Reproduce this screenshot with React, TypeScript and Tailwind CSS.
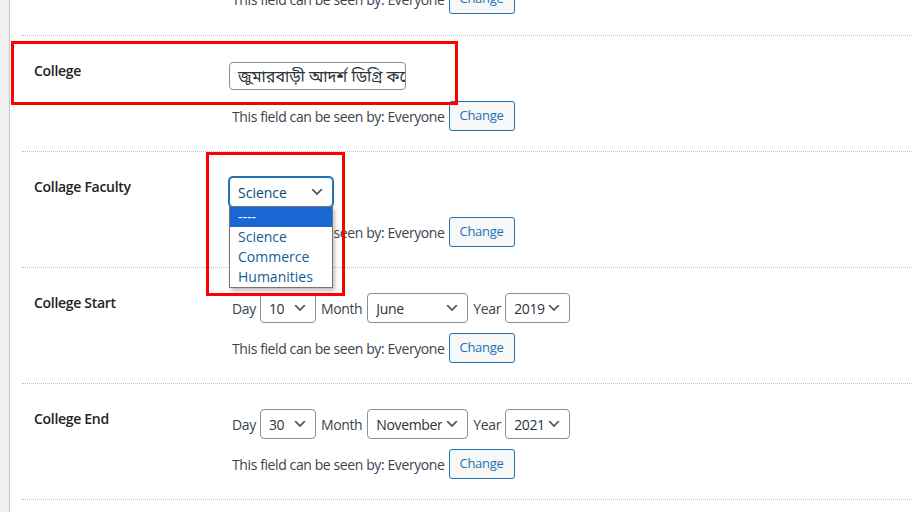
import React from "react";

const FONT = { fontFamily: '"Open Sans", "Noto Sans", "Noto Sans Bengali", sans-serif' };

function Chevron({ color = "#50575e" }: { color?: string }) {
  return (
    <svg viewBox="0 0 20 20" className="size-4 shrink-0" fill={color}>
      <path d="M5 6l5 5 5-5 2 1-7 7-7-7 2-1z" />
    </svg>
  );
}

function Select({ value, width, focused }: { value: string; width: string; focused?: boolean }) {
  return (
    <div
      className={
        "flex h-[30px] items-center justify-between rounded-[4px] border bg-white pl-[8px] pr-[7px] text-[14px] " +
        width +
        (focused
          ? " border-[#2271b1] text-[#0a4b78] shadow-[0_0_0_1px_#2271b1]"
          : " border-[#8c8f94] text-[#2c3338]")
      }
    >
      <span className="truncate">{value}</span>
      <Chevron />
    </div>
  );
}

function Visibility() {
  return (
    <div className="flex h-[30px] items-center pl-[3px]">
      <span className="text-[14px] tracking-[-0.4px] text-[#3c434a]">
        This field can be seen by: Everyone
      </span>
      <button className="ml-[4px] flex h-[30px] w-[66px] items-center justify-center rounded-[3px] border border-[#2271b1] bg-[#f6f7f7] text-[13px] tracking-[-0.3px] text-[#2271b1]">
        Change
      </button>
    </div>
  );
}

function Row({ label, children }: { label: string; children: React.ReactNode }) {
  return (
    <div className="flex h-[116px] border-b border-dotted border-[#c3c4c7] pt-[25px]">
      <div className="w-[207px] shrink-0 pl-[12px] text-[14px] font-semibold leading-[20px] tracking-[-0.3px] text-[#1d2327]">
        {label}
      </div>
      <div className="flex flex-col gap-[10px]">
        <div className="flex h-[30px] items-center">{children}</div>
        <Visibility />
      </div>
    </div>
  );
}

function DateFields({ day, month, year }: { day: string; month: string; year: string }) {
  return (
    <div className="flex items-center text-[14px] tracking-[-0.35px] text-[#3c434a]">
      <span className="pl-[3px] pr-[4px]">Day</span>
      <Select value={day} width="w-[56px]" />
      <span className="px-[5px]">Month</span>
      <Select value={month} width="w-[101px]" />
      <span className="pl-[5px] pr-[4px]">Year</span>
      <Select value={year} width="w-[65px]" />
    </div>
  );
}

export default function App() {
  return (
    <div className="relative flex h-[512px] w-[912px] overflow-hidden bg-white" style={FONT}>
      <div className="w-[10px] shrink-0 border-r border-[#c3c4c7] bg-[#f0f0f0]" />
      <div className="ml-[12px] flex-1">
        <div className="flex h-[36px] items-end border-b border-dotted border-[#c3c4c7] pb-[21px] pl-[207px]">
          <Visibility />
        </div>

        <Row label="College">
          <div className="flex h-[28px] w-[177px] items-center overflow-hidden whitespace-nowrap rounded-[4px] border border-[#8c8f94] bg-white px-[8px] text-[16px] text-[#2c3338]">
            জুমারবাড়ী আদর্শ ডিগ্রি কলেজ
          </div>
        </Row>

        <Row label="Collage Faculty">
          <div className="relative">
            <Select value="Science" width="w-[104px]" focused />
            <div className="absolute left-0 top-[29px] z-10 w-[104px] border border-[#767676] bg-white text-[14px] leading-[20px] text-[#135e96] shadow-[2px_3px_4px_rgba(0,0,0,0.25)]">
              <div className="bg-[#1967d2] pl-[8px] text-white">----</div>
              <div className="pl-[8px]">Science</div>
              <div className="pl-[8px]">Commerce</div>
              <div className="pl-[8px]">Humanities</div>
            </div>
          </div>
        </Row>

        <Row label="College Start">
          <DateFields day="10" month="June" year="2019" />
        </Row>

        <Row label="College End">
          <DateFields day="30" month="November" year="2021" />
        </Row>
      </div>

      <div className="pointer-events-none absolute left-[11px] top-[41px] h-[64px] w-[447px] border-[3px] border-[#ff0000]" />
      <div className="pointer-events-none absolute left-[206px] top-[152px] h-[144px] w-[139px] border-[3px] border-[#ff0000]" />
    </div>
  );
}
